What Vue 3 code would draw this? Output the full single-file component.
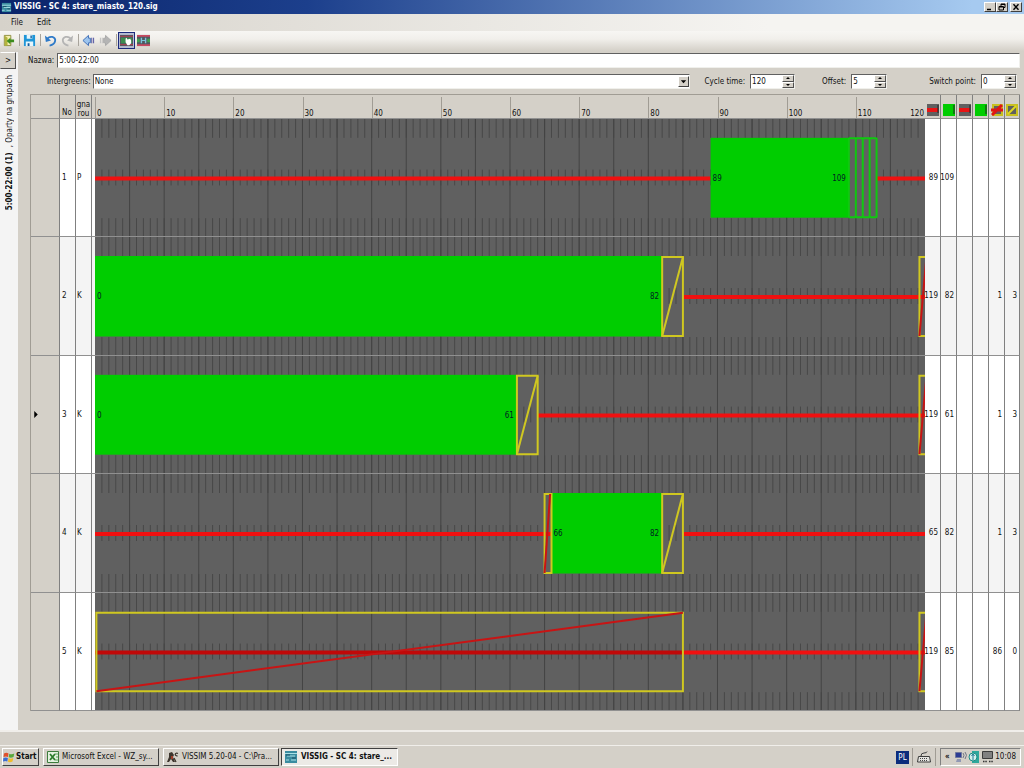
<script setup>
import { ref } from 'vue'

const name = ref('5:00-22:00')
const intergreens = ref('None')
const cycle = ref(120)
const offset = ref(5)
const switchPoint = ref(0)

const pct = (s) => (s / 120) * 100 + '%'

const scale = Array.from({ length: 12 }, (_, i) => i * 10)
const minor = Array.from({ length: 119 }, (_, i) => i + 1)
  .map((s) => `M${s} 0V19M${s} 51V67M${s} 100V118`)
  .join('')
const major = Array.from({ length: 23 }, (_, i) => (i + 1) * 5)
  .map((s) => `M${s} 0V118`)
  .join('')

const groups = [
  { no: 1, kind: 'P', red: [[0, 89], [113, 120]], green: [89, 109], flash: [109, 110, 111, 112, 113], cells: [89, 109, '', '', '', ''] },
  { no: 2, kind: 'K', red: [[85, 120]], green: [0, 82], amber: [82, 85], redAmber: [119.2, 120.4], cells: [119, 82, '', '', 1, 3] },
  { no: 3, kind: 'K', red: [[64, 120]], green: [0, 61], amber: [61, 64], redAmber: [119.2, 120.4], cells: [119, 61, '', '', 1, 3], current: true },
  { no: 4, kind: 'K', red: [[0, 66], [85, 120]], green: [66, 82], amber: [82, 85], redAmber: [65, 66], cells: [65, 82, '', '', 1, 3] },
  { no: 5, kind: 'K', red: [[85, 120]], dim: [0, 85], wide: [0.2, 85], redAmber: [119.2, 120.4], cells: [119, 85, '', '', 86, 0] }
]
const marks = ['red', 'green', 'red', 'green', 'redamber', 'amber']
</script>

<template>
  <div class="app">
    <header class="title">
      <svg class="ico" viewBox="0 0 12 12"><path fill="#3a8ca0" d="M1 1h10v10H1z" /><path stroke="#a9e0e6" d="M1 3.500h10M3 6h7M1 9h3M6 9h5" /><path stroke="#174a62" d="M2 5h4M7 7.500h3" /></svg>
      <h1>VISSIG - SC 4: stare_miasto_120.sig</h1>
      <div class="winbtns">
        <button aria-label="Minimize"><svg viewBox="0 0 10 8"><path d="M2 6.500h4" stroke="#000" stroke-width="1.500" /></svg></button>
        <button aria-label="Restore"><svg viewBox="0 0 10 8"><path d="M4 3V1h4v3.500H6.500M4 1.500h4M2 3.500h4.500V7H2zM2 4h4" fill="none" stroke="#000" /></svg></button>
        <button class="close" aria-label="Close"><svg viewBox="0 0 10 8"><path d="M2.500 1.200l5 5.600M7.500 1.200l-5 5.600" stroke="#000" stroke-width="1.400" /></svg></button>
      </div>
    </header>

    <nav class="menu"><button>File</button><button>Edit</button></nav>

    <div class="tools">
      <button aria-label="Exit"><svg viewBox="0 0 14 14"><path fill="#f5efb0" stroke="#8c8c3c" d="M2.500 1.500h7v11h-7z" /><path fill="#b4b43c" d="M3 2l3 2v8l-3 1z" /><path fill="#3c8c1e" d="M5 7.500l4-3.500v2h4v3H9v2z" /></svg></button>
      <i class="sep"></i>
      <button aria-label="Save"><svg viewBox="0 0 14 14"><path fill="#1e96d8" d="M1 1h12v12H1z" /><path fill="#e6f6fc" d="M4 1h6v4H4zM3 8h8v5H3z" /><path fill="#155c9c" d="M8 1.500h1.500v3H8zM5 10h2v3H5z" /></svg></button>
      <i class="sep"></i>
      <button aria-label="Undo"><svg viewBox="0 0 14 14"><path d="M3 6c3-5 10-3 9 1.500-.5 3-3 4.500-6 5" fill="none" stroke="#2f7ac8" stroke-width="2" /><path fill="#2f7ac8" d="M1 1.500l1 7 5.500-1.500z" /></svg></button>
      <button aria-label="Redo"><svg viewBox="0 0 14 14"><path d="M11 6C8 1 1 3 2 7.500c.5 3 3 4.500 6 5" fill="none" stroke="#b4b4b4" stroke-width="2" /><path fill="#b4b4b4" d="M13 1.500l-1 7-5.500-1.500z" /></svg></button>
      <i class="sep"></i>
      <button aria-label="Back"><svg viewBox="0 0 14 14"><path fill="#9cc4ee" stroke="#3c6cb4" d="M1 7l6-5.500v3h2v5H7v3z" /><path d="M10.500 4v6M12.500 4v6" stroke="#4c4c9c" /></svg></button>
      <button aria-label="Forward"><svg viewBox="0 0 14 14"><path fill="#b4b4b4" stroke="#a8a8a8" d="M13 7L7 1.500v3H5v5h2v3z" /><path d="M3.500 4v6M1.500 4v6" stroke="#bcbcbc" /></svg></button>
      <i class="sep"></i>
      <button class="on" aria-label="Edit signal times"><svg viewBox="0 0 14 14"><path fill="#505860" d="M0 1h14v12H0z" /><path d="M0 2.500h14M0 11.500h14" stroke="#b43c50" /><path fill="#3c8c50" d="M1 4h12v6H1z" /><path fill="#fff" d="M6 5l1-1 1 2 3-1 1 2v3l-2 2H8L6 9z" /></svg></button>
      <button class="last" aria-label="Stretch cycle"><svg viewBox="0 0 14 14"><path fill="#505860" d="M0 1h14v12H0z" /><path d="M0 2h14M0 12h14" stroke="#c84860" stroke-width="2" /><path fill="#7cc4dc" d="M4 4h1.500v6H4zM8.500 4H10v6H8.500zM5 6.500h4v1H5z" /><path fill="#3ca050" d="M0 5h3v4H0zM11 5h3v4h-3z" /></svg></button>
    </div>

    <div class="body">
      <aside class="side">
        <button aria-label="Expand">&gt;</button>
        <p><b>5:00-22:00 (1)</b><span>, Oparty na grupach</span></p>
      </aside>

      <main class="panel">
        <div class="namerow">
          <label for="name">Nazwa:</label>
          <input id="name" v-model="name" type="text">
        </div>
        <div class="params">
          <label for="ig">Intergreens:</label>
          <div class="combo">
            <select id="ig" v-model="intergreens"><option>None</option></select>
            <span class="drop"><svg viewBox="0 0 8 8"><path d="M1 2.500h6L4 6z" /></svg></span>
          </div>
          <label for="ct" class="l1">Cycle time:</label>
          <div class="spin wide">
            <input id="ct" v-model="cycle" type="number">
            <span><button aria-label="Increase cycle time"><svg viewBox="0 0 8 4"><path d="M2 3h4L4 1z" /></svg></button><button aria-label="Decrease cycle time"><svg viewBox="0 0 8 4"><path d="M2 1h4L4 3z" /></svg></button></span>
          </div>
          <label for="of" class="l2">Offset:</label>
          <div class="spin">
            <input id="of" v-model="offset" type="number">
            <span><button aria-label="Increase offset"><svg viewBox="0 0 8 4"><path d="M2 3h4L4 1z" /></svg></button><button aria-label="Decrease offset"><svg viewBox="0 0 8 4"><path d="M2 1h4L4 3z" /></svg></button></span>
          </div>
          <label for="sp" class="l3">Switch point:</label>
          <div class="spin">
            <input id="sp" v-model="switchPoint" type="number">
            <span><button aria-label="Increase switch point"><svg viewBox="0 0 8 4"><path d="M2 3h4L4 1z" /></svg></button><button aria-label="Decrease switch point"><svg viewBox="0 0 8 4"><path d="M2 1h4L4 3z" /></svg></button></span>
          </div>
        </div>

        <table class="plan">
          <colgroup>
            <col class="c-head"><col class="c-id"><col class="c-id"><col>
            <col v-for="(m, i) in marks" :key="i" :class="i < 5 ? 'c-id' : 'c-last'">
          </colgroup>
          <thead>
            <tr>
              <th></th>
              <th class="no">No</th>
              <th><div class="sg"><span>gna</span><span>rou</span></div></th>
              <th class="time">
                <div class="scale">
                  <span v-for="s in scale" :key="s" :style="{ left: pct(s) }">{{ s }}</span>
                  <span class="end">120</span>
                </div>
              </th>
              <th v-for="(m, i) in marks" :key="i" class="mark">
                <svg viewBox="0 0 12 12">
                  <template v-if="m === 'red'"><path fill="#606060" d="M0 0h12v12H0z" /><path fill="#e81414" d="M0 4h11v4H0z" /><path d="M11 1v8" stroke="#222" stroke-width="1" /></template>
                  <template v-else-if="m === 'green'"><path fill="#00cd00" d="M0 0h12v12H0z" /><path d="M11 1v9" stroke="#222" stroke-width="1" /></template>
                  <template v-else-if="m === 'redamber'"><path fill="#606060" stroke="#c8c020" stroke-width="2" d="M2 1h9v10H2z" /><path d="M0 6h12M1 11L11 1" stroke="#e01414" stroke-width="3" /></template>
                  <template v-else><path fill="#606060" stroke="#c8c020" stroke-width="2" d="M1 1h10v10H1z" /><path d="M2 10l8-8" stroke="#e0d820" stroke-width="2" /></template>
                </svg>
              </th>
            </tr>
          </thead>
          <tbody>
            <tr v-for="g in groups" :key="g.no">
              <th scope="row"><svg v-if="g.current" class="cur" viewBox="0 0 4 8"><path d="M0 0l4 4-4 4z" /></svg></th>
              <td class="no">{{ g.no }}</td>
              <td class="kind">{{ g.kind }}</td>
              <td class="time">
                <div class="plot">
                  <svg viewBox="0 0 120 118" preserveAspectRatio="none">
                    <path class="minor" :d="minor" />
                    <path class="major" :d="major" />
                    <path v-for="(r, i) in g.red" :key="i" class="red" :d="`M${r[0]} 60H${r[1]}`" />
                    <path v-if="g.dim" class="red dim" :d="`M${g.dim[0]} 60H${g.dim[1]}`" />
                    <rect v-if="g.green" class="green" :x="g.green[0]" y="19" :width="g.green[1] - g.green[0]" height="80.500" />
                    <template v-if="g.flash">
                      <path class="flash" d="M109 19.500H113M109 99H113" />
                      <path v-for="f in g.flash" :key="f" class="flash" :d="`M${f} 19V99.500`" />
                    </template>
                    <path v-if="g.amber" class="amber" :d="`M${g.amber[0]} 20H${g.amber[1]}V99H${g.amber[0]}ZL${g.amber[0]} 99`" />
                    <path v-if="g.amber" class="slash" :d="`M${g.amber[0]} 99L${g.amber[1]} 20`" />
                    <template v-if="g.wide">
                      <path class="amber" :d="`M${g.wide[0]} 20H${g.wide[1]}V99H${g.wide[0]}Z`" />
                      <path class="diag" :d="`M${g.wide[0]} 99L${g.wide[1]} 20`" />
                    </template>
                    <template v-if="g.redAmber">
                      <path class="amber" :d="`M${g.redAmber[0]} 20H${g.redAmber[1]}V99H${g.redAmber[0]}Z`" />
                      <path class="diag" :d="`M${g.redAmber[0]} 99L${g.redAmber[1] - 0.2} 20`" />
                    </template>
                  </svg>
                  <div v-if="g.green" class="lab" :style="{ left: pct(g.green[0]), width: pct(g.green[1] - g.green[0]) }">
                    <span>{{ g.green[0] }}</span><span>{{ g.green[1] }}</span>
                  </div>
                </div>
              </td>
              <td v-for="(c, i) in g.cells" :key="i" class="num"><span>{{ c }}</span></td>
            </tr>
          </tbody>
        </table>
      </main>
    </div>

    <div class="status"></div>

    <footer class="taskbar">
      <button class="start">
        <svg viewBox="0 0 12 12"><path fill="#e0502c" d="M1 2.500q2.500-1.500 4.500 0L5 6Q3 5 .5 6z" /><path fill="#58a83c" d="M6.300 2.800q2.500 1.200 5-.3L10.500 6q-2.500 1.200-4.800.2z" /><path fill="#3c6cd0" d="M.4 7q2.500-1.200 4.500 0l-.6 3.500Q2.500 9.500 0 10.500z" /><path fill="#f0bc28" d="M5.500 7.200q2.500 1 4.800-.2l-.8 3.500q-2.500 1.200-4.500.2z" /></svg>
        Start
      </button>
      <button class="task">
        <svg viewBox="0 0 12 12"><path fill="#e4f2e0" stroke="#3c7c3c" d="M.5.500h11v11H.5z" /><path d="M3 3l5 6M8 3L3 9" stroke="#2c7c2c" stroke-width="1.800" /><path d="M8 3h3M9 6h2M8 9h3" stroke="#5ca45c" /></svg>
        <span>Microsoft Excel - WZ_sy...</span>
      </button>
      <button class="task">
        <svg viewBox="0 0 12 12"><path fill="#3c342c" d="M2 2l3-1 2 3-1 2 2 5H6L4 8l-2 3H0l2-5z" /><path fill="#a03c28" d="M4 5h2v3H4z" /><path d="M11 2.500C8 1 7 5 10.500 5M7 7l2 4" fill="none" stroke="#3c342c" stroke-width="1.300" /></svg>
        <span>VISSIM 5.20-04 - C:\Pra...</span>
      </button>
      <button class="task active">
        <svg viewBox="0 0 12 12"><path fill="#3a8ca0" d="M0 0h12v12H0z" /><path stroke="#a9e0e6" d="M0 2.500h12M2 5h8M1 9h3M6 9h5" /><path stroke="#174a62" d="M1 4h4M7 7h4" /></svg>
        <span>VISSIG - SC 4: stare_...</span>
      </button>
      <div class="fill"></div>
      <span class="lang">PL</span>
      <i class="tsep"></i>
      <svg class="kbd" viewBox="0 0 14 12"><path fill="#e4e4e0" stroke="#3c3c3c" d="M1.500 5.500h11l1 5.500H.5zM4 5q0-3 3-3t3-1.500" /><path d="M3 7.500h8M3 9.500h8" stroke="#444" stroke-dasharray="1 1" /></svg>
      <i class="tsep"></i>
      <div class="tray">
        <span class="chev">«</span>
        <svg viewBox="0 0 12 12"><path fill="#2c3c94" stroke="#70789c" d="M.5 1.500h6v5h-6z" /><path fill="#9098b4" d="M2 8h4v3H1z" /><path d="M8 2q2 2 0 5M10 1q3 3 0 7" fill="none" stroke="#707484" /></svg>
        <svg viewBox="0 0 12 12"><path fill="#2ca89c" d="M4 0h7v12H4z" /><circle cx="5" cy="6" r="4" fill="#d4f0ec" stroke="#1c8c84" /><path d="M5 3v6M3.500 5L5 3l1.500 2" fill="none" stroke="#1c7c94" /></svg>
        <svg viewBox="0 0 12 12"><path fill="#808080" stroke="#3c3c3c" d="M1.500.500h10v7h-10z" /><path d="M2 10.500h4M8 10.500h4" stroke="#333" stroke-width="1.500" stroke-dasharray="1.500 .8" /></svg>
        <time>10:08</time>
      </div>
    </footer>
  </div>
</template>

<style>
body { background: #d4d0c8; }
</style>

<style scoped>
.app {
  min-height: 100vh;
  display: flex;
  flex-direction: column;
  background: #d4d0c8;
  color: #111;
  font: 8px/10px "DejaVu Sans Condensed", "DejaVu Sans", sans-serif;
}
.app *, .app *::before { box-sizing: border-box; }
button, input, select { font: inherit; color: inherit; margin: 0; padding: 0; border-radius: 0; }
button { border: 0; background: none; }
svg { display: block; }

.title { height: 14px; display: flex; align-items: center; padding: 0 2px 0 1px; background: linear-gradient(90deg, #0a246a, #1c3f8c 30%, #a6caf0 95%); }
.title .ico { width: 11px; height: 11px; }
.title h1 { flex: 1; margin: 0 0 0 2px; color: #fff; font-size: 8px; line-height: 12px; font-weight: bold; }
.winbtns { display: flex; }
.winbtns button { width: 12px; height: 10px; background: #d4d0c8; border: 1px solid; border-color: #fff #404040 #404040 #fff; }
.winbtns .close { margin-left: 2px; }
.winbtns svg { width: 10px; height: 8px; }

.menu { height: 17px; display: flex; align-items: center; gap: 14px; padding: 0 11px; background: linear-gradient(90deg, #d6d2ca, #f5f4f1 75%); }
.tools { height: 20px; display: flex; align-items: center; gap: 4px; padding: 0 2px 2px; background: linear-gradient(#f7f6f3, #f1efeb 40%, #d4d0c8); }
.tools button { width: 13px; height: 13px; }
.tools button svg { width: 100%; height: 100%; }
.tools .sep { width: 1px; height: 12px; margin-right: -1px; background: #a8a49c; }
.tools .on { width: 17px; height: 17px; margin-left: -2px; padding: 1px; border: 1px solid #1c2a7c; background: #b6bdd2; }
.tools .last { margin-left: -2px; }

.body { flex: 1; display: flex; margin-top: 1px; }
.side { width: 18px; background: #f4f4f4; }
.side button { display: block; width: 16px; height: 17px; background: #d4d0c8; border: 1px solid; border-color: #fff #505050 #505050 #d4d0c8; }
.side p { margin: 6px 0 0 4px; writing-mode: vertical-rl; transform: rotate(180deg); white-space: nowrap; line-height: 11px; }
.side span { margin-top: 5px; }

.panel { flex: 1; min-width: 0; padding: 1px 4px 19px 12px; }
.namerow { display: flex; align-items: center; gap: 3px; margin-left: -2px; }
input, select { background: #fff; border: 1px solid; border-color: #606060 #f0f0ec #f0f0ec #606060; outline: 0; }
.namerow input { flex: 1; min-width: 0; height: 15px; padding-left: 1px; }
.params { display: flex; align-items: center; margin-top: 6px; padding: 0 3px 0 17px; height: 15px; white-space: nowrap; }
.params label { line-height: 12px; }
.combo { flex: 1; position: relative; height: 15px; margin-left: 2px; }
.combo select { appearance: none; width: 100%; height: 15px; padding-left: 1px; }
.drop { position: absolute; right: 1px; top: 2px; width: 11px; height: 11px; padding: 1px; background: #d4d0c8; border: 1px solid; border-color: #fff #404040 #404040 #fff; pointer-events: none; }
.l1 { margin-left: 14px; }
.l2 { margin-left: 27px; }
.l3 { margin-left: 42px; }
.spin { width: 36px; height: 15px; margin-left: 5px; display: flex; background: #fff; border: 1px solid; border-color: #606060 #f0f0ec #f0f0ec #606060; }
.spin.wide { width: 45px; }
.spin input { flex: 1; min-width: 0; border: 0; padding-left: 1px; appearance: textfield; }
.spin input::-webkit-inner-spin-button { display: none; }
.spin span { width: 12px; display: flex; flex-direction: column; }
.spin button { flex: 1; min-height: 0; background: #d4d0c8; border: 1px solid; border-color: #fff #505050 #505050 #fff; }
.spin button svg { width: 8px; height: 4px; margin: 0 auto; }

.plan { width: 100%; table-layout: fixed; border-collapse: separate; border-spacing: 0; margin-top: 5px; border-left: 1px solid #a09c94; border-top: 1px solid #a09c94; }
.c-head { width: 29px; }
.c-id { width: 16px; }
.c-last { width: 15px; }
.plan th, .plan td { padding: 0; font-weight: normal; border-right: 1px solid #808080; border-bottom: 1px solid #909090; }
.plan th { background: #d4d0c8; }
.plan thead th { height: 24px; vertical-align: bottom; }
.plan tbody tr { height: 118px; }
.plan tbody tr:nth-child(even) { height: 119px; }
.plan tbody td { background: #fff; }
.plan tbody tr:nth-child(even) td { background: #f4f4f4; }
.plan .no { padding-left: 2px; text-align: left; }
.plan .kind { padding-left: 1px; }
.sg { display: flex; flex-direction: column; align-items: center; line-height: 9px; }
.plan .time { position: relative; padding: 0 0 0 3px; border-right: 0; }
.scale { position: relative; height: 23px; }
.scale span { position: absolute; bottom: 0; height: 21px; padding: 11px 0 0 1px; border-left: 1px solid #a09c94; line-height: 11px; }
.scale .end { right: 1px; border-left: 0; padding-left: 0; }
.plan .mark { padding-bottom: 2px; }
.mark svg { width: 12px; height: 12px; margin: 0 auto; }
.cur { width: 4px; height: 7px; margin-left: 3px; }

/* The plot fills its table cell, right of a narrow white margin. */
.plot { position: absolute; inset: 0 0 0 3px; background: #606060; }
.plot svg { width: 100%; height: 100%; }
.plot path { fill: none; vector-effect: non-scaling-stroke; }
.minor { stroke: #484848; stroke-width: 1px; }
.major { stroke: #444; stroke-width: 1px; }
.red { stroke: #f01010; stroke-width: 4px; }
.dim { stroke: #c00808; }
.green { fill: #00cd00; }
.flash { stroke: #10c810; stroke-width: 2px; }
.amber { stroke: #d0c820; stroke-width: 2px; }
.slash { stroke: #d0c820; stroke-width: 2px; }
.diag { stroke: #c81414; stroke-width: 2px; }
.lab { position: absolute; top: 2px; bottom: 0; display: flex; justify-content: space-between; align-items: center; padding: 0 3px 0 2px; color: #022; }
.num span { display: flex; justify-content: flex-end; padding-right: 2px; }
.num { position: relative; }

.status { height: 15px; border-top: 2px solid #f0eeea; }
.taskbar { height: 23px; display: flex; align-items: center; gap: 4px; padding: 0 3px 0 2px; border-top: 1px solid #f0eeea; }
.taskbar button { height: 18px; display: flex; align-items: center; border: 1px solid; border-color: #fff #404040 #404040 #fff; }
.taskbar svg { flex: none; width: 12px; height: 12px; }
.start { width: 37px; gap: 1px; font-weight: bold; }
.taskbar .task { width: 116px; gap: 3px; padding: 0 3px; white-space: nowrap; }
.taskbar .active { width: 117px; margin-left: -2px; gap: 4px; font-weight: bold; background: #eceae6; border-color: #404040 #fff #fff #404040; }
.fill { flex: 1; }
.lang { width: 13px; height: 13px; margin-right: -1px; background: #0c2c7c; color: #fff; text-align: center; line-height: 13px; }
.tsep { width: 1px; height: 18px; background: #a09c94; }
.taskbar .kbd { width: 14px; }
.tray { display: flex; align-items: center; gap: 1px; height: 18px; width: 81px; padding: 0 4px; border: 1px solid; border-color: #808080 #fff #fff #808080; }
.chev { font-weight: bold; width: 9px; }
.tray time { margin-left: auto; }
</style>
